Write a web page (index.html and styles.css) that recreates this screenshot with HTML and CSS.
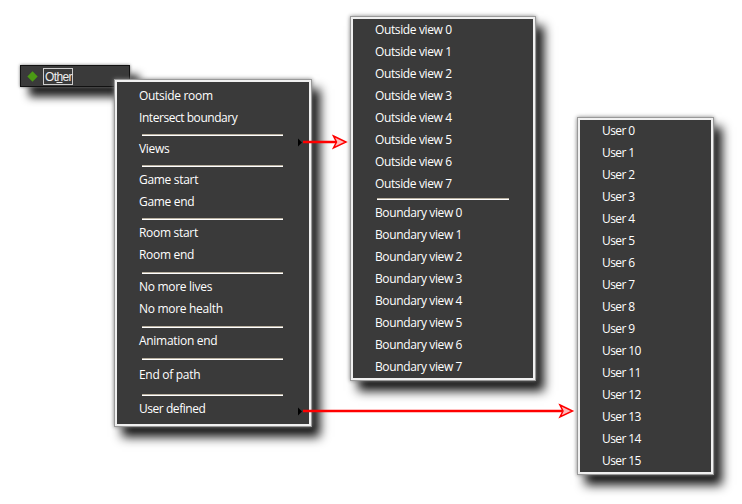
FILE: index.html
```html
<!DOCTYPE html>
<html lang="en">
<head>
<meta charset="utf-8">
<title>Other events</title>
<link rel="stylesheet" href="styles.css">
</head>
<body>
<main class="canvas">
<button class="event-button"><svg width="11" height="11" viewBox="0 0 11 11"><path d="M5.5 .3 10.7 5.5 5.5 10.7 .3 5.5Z" fill="#4b9a14"/></svg><span class="label">Ot<span class="key">h</span>er</span></button>
<ul class="menu menu-main">
<li>Outside room</li><li class="tight">Intersect boundary</li>
<li class="rule"></li><li class="sub">Views</li>
<li class="rule"></li><li>Game start</li><li>Game end</li>
<li class="rule"></li><li>Room start</li><li>Room end</li>
<li class="rule mid"></li><li>No more lives</li><li>No more health</li>
<li class="rule mid"></li><li>Animation end</li>
<li class="rule wide"></li><li>End of path</li>
<li class="rule wide low"></li><li class="tight sub">User defined</li>
</ul>
<ul class="menu menu-views">
<li>Outside view 0</li><li>Outside view 1</li><li>Outside view 2</li><li>Outside view 3</li><li>Outside view 4</li><li>Outside view 5</li><li>Outside view 6</li><li>Outside view 7</li>
<li class="rule"></li>
<li>Boundary view 0</li><li>Boundary view 1</li><li>Boundary view 2</li><li>Boundary view 3</li><li>Boundary view 4</li><li>Boundary view 5</li><li>Boundary view 6</li><li>Boundary view 7</li>
</ul>
<ul class="menu menu-user">
<li>User 0</li><li>User 1</li><li>User 2</li><li>User 3</li><li>User 4</li><li>User 5</li><li>User 6</li><li>User 7</li><li>User 8</li><li>User 9</li><li>User 10</li><li>User 11</li><li>User 12</li><li>User 13</li><li>User 14</li><li>User 15</li>
</ul>
<svg class="arrows" width="742" height="504" viewBox="0 0 742 504">
<g fill="#000"><path d="M298 138.5 302 142.5 298 146.5Z"/><path d="M298 407.5 302 411.5 298 415.5Z"/></g>
<g stroke="#f00" fill="none"><path d="M303 142H336M303 411H562" stroke-width="2.4"/>
<path d="M333.5 136 346 142 333.5 148 336.5 142ZM560 405 572.5 411 560 417 563 411Z" fill="#fbb" stroke-width="1.5"/></g>
</svg>
</main>
</body>
</html>
```
FILE: styles.css
```css
*, ::after { box-sizing: border-box; }
body { margin: 0; background: #fff; }
.canvas {
  position: relative;
  width: 742px;
  height: 504px;
  overflow: hidden;
  font: 12px/22px "Open Sans", "Noto Sans", sans-serif;
  color: #fff;
}
.event-button {
  position: absolute;
  left: 20px;
  top: 65px;
  width: 110px;
  height: 22px;
  display: flex;
  align-items: center;
  gap: 5px;
  padding: 0 0 0 6px;
  border: 1px solid #111;
  background: #3a3a3a;
  color: #eee;
  font: 12px/16px "Liberation Sans", sans-serif;
  letter-spacing: -.6px;
  box-shadow: 0 0 3px #777, 9px 10px 9px #000d;
}
.label { border: 1px solid #ccc; height: 17px; width: 30px; padding-left: 1px; text-align: left; }
.key { text-decoration: underline; }
.menu {
  position: absolute;
  margin: 0;
  padding: 0 0 0 22px;
  list-style: none;
  border: 2px solid #f0f0f0;
  background: #3a3a3a;
  box-shadow: 0 0 0 1px #999, 0 0 4px 1px #888, 8px 10px 10px 1px #000e;
}
.menu li { height: 22px; white-space: nowrap; }
.menu-main { left: 115px; top: 80px; width: 196px; height: 346px; padding-top: 3px; letter-spacing: -.3px; }
.menu .tight { letter-spacing: -.45px; }
.menu-views { left: 351px; top: 17px; width: 184px; height: 363px; letter-spacing: -.38px; }
.menu-user { left: 578px; top: 118px; width: 135px; height: 356px; letter-spacing: -.6px; }
.menu .rule { height: 9px; padding: 5px 0 0 3px; }
.rule::after { content: ""; display: block; width: 141px; height: 2px; background: #fff; border-top: 1px solid #b8b0a0; }
.menu .mid { height: 10px; padding-top: 6px; }
.menu .wide { height: 12px; padding-top: 6px; }
.menu .low { padding-top: 8px; }
.menu-views .rule { height: 7px; padding: 3px 0 0 2px; }
.menu-views .rule::after { width: 132px; }
.arrows { position: absolute; inset: 0; pointer-events: none; }
```
